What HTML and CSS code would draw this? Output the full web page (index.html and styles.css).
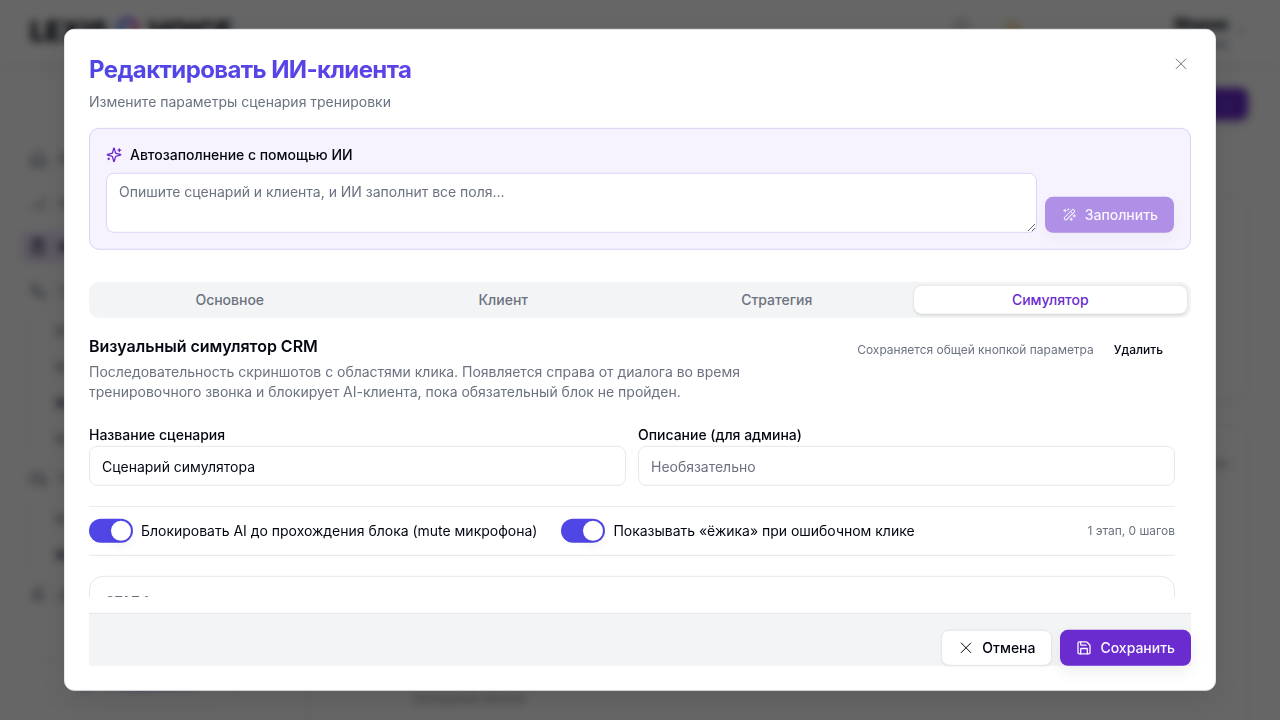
FILE: index.html
```html
<!DOCTYPE html>
<html lang="ru">
<head>
  <meta charset="UTF-8">
  <title>Редактировать ИИ-клиента</title>
  <link rel="stylesheet" href="styles.css">
</head>
<body>
  <div class="app" aria-hidden="true">
    <header class="topbar">
      <div class="logo">LEXIS<span class="logo-dot"></span>VOICE</div>
      <div class="topbar-right">
        <span class="bell"></span>
        <span class="coin"></span>
        <div class="user"><b>Мария</b><small>Админ</small></div>
        <svg class="chevron" viewBox="0 0 24 24"><path d="m6 9 6 6 6-6"/></svg>
      </div>
    </header>
    <div class="columns">
      <aside class="sidebar">
        <nav class="nav">
          <a><svg viewBox="0 0 24 24"><path d="M3 10l9-7 9 7v11H3z M9 21v-8h6v8"/></svg>Я</a>
          <a><svg viewBox="0 0 24 24"><path d="M5 21v-6 M12 21V10 M19 21V4"/></svg>А</a>
          <a class="active"><svg viewBox="0 0 24 24"><path d="M5 4h14v17H5z M9 2h6v4H9z M9 11h6 M9 16h6"/></svg>И</a>
          <a><svg viewBox="0 0 24 24"><path d="M4 3h5l2 5-3 2a12 12 0 0 0 6 6l2-3 5 2v5C11 21 3 13 4 3z"/></svg>З</a>
          <div class="subnav">
            <a><i></i></a>
            <a><i></i></a>
            <a><i class="dark"></i></a>
            <a><i></i></a>
          </div>
          <a><svg viewBox="0 0 24 24"><path d="M3 4h13v10H8l-5 4z M19 9h2v12l-4-3h-6"/></svg>Ч</a>
          <div class="subnav">
            <a><i></i></a>
            <a><i class="dark"></i></a>
          </div>
          <a><svg viewBox="0 0 24 24"><path d="M9 3h6v11H9z M5 11c0 9 14 9 14 0 M12 18v4"/></svg>Д</a>
        </nav>
        <div class="side-card"><i></i>Поддержка</div>
      </aside>
      <main class="page">
        <div class="page-head"><span class="create">+</span></div>
        <section class="panel first"></section>
        <section class="panel second"><div>Все</div><p>Холодный звонок</p></section>
      </main>
    </div>
  </div>

  <div class="overlay"></div>

  <div class="dialog" role="dialog">
    <div class="dialog-header">
      <h2 class="dialog-title">Редактировать ИИ-клиента</h2>
      <p class="dialog-desc">Измените параметры сценария тренировки</p>
    </div>

    <div class="ai-box">
      <div class="ai-title">
        <svg class="icon" viewBox="0 0 24 24"><path d="M9.937 15.5A2 2 0 0 0 8.5 14.063l-6.135-1.582a.5.5 0 0 1 0-.962L8.5 9.936A2 2 0 0 0 9.937 8.5l1.582-6.135a.5.5 0 0 1 .963 0L14.063 8.5A2 2 0 0 0 15.5 9.937l6.135 1.581a.5.5 0 0 1 0 .964L15.5 14.063a2 2 0 0 0-1.437 1.437l-1.582 6.135a.5.5 0 0 1-.963 0z"/><path d="M20 3v4"/><path d="M22 5h-4"/><path d="M4 17v2"/><path d="M5 18H3"/></svg>
        Автозаполнение с помощью ИИ
      </div>
      <div class="ai-row">
        <textarea class="ai-text" placeholder="Опишите сценарий и клиента, и ИИ заполнит все поля..."></textarea>
        <button class="btn btn-primary" disabled>
          <svg class="icon thin" viewBox="0 0 16 16"><rect x="1.9" y="6.4" width="13" height="2.9" rx="1" transform="rotate(-45 8.4 7.85)"/><path d="M9.6 4.8l1.9 1.9"/><path d="M4 2.5v2.6M2.7 3.8h2.6M7.3 2.1v1M6.8 2.6h1M13.2 7.8v2.6M11.9 9.1h2.6M10.3 11.2v2.4M9.1 12.4h2.4"/></svg>
          Заполнить
        </button>
      </div>
    </div>

    <div class="tabs">
      <button class="tab">Основное</button>
      <button class="tab">Клиент</button>
      <button class="tab">Стратегия</button>
      <button class="tab active">Симулятор</button>
    </div>

    <div class="content">
      <div class="sim-head">
        <div class="sim-info">
          <h3>Визуальный симулятор CRM</h3>
          <p>Последовательность скриншотов с областями клика. Появляется справа от диалога во время тренировочного звонка и блокирует AI-клиента, пока обязательный блок не пройден.</p>
        </div>
        <div class="sim-actions">
          <span>Сохраняется общей кнопкой параметра</span>
          <button class="btn-ghost">Удалить</button>
        </div>
      </div>

      <div class="fields">
        <div class="field">
          <label for="name">Название сценария</label>
          <input id="name" type="text" value="Сценарий симулятора">
        </div>
        <div class="field">
          <label for="desc">Описание (для админа)</label>
          <input id="desc" type="text" placeholder="Необязательно">
        </div>
      </div>

      <div class="switches">
        <div class="switch-item"><span class="switch"></span>Блокировать AI до прохождения блока (mute микрофона)</div>
        <div class="switch-item"><span class="switch"></span>Показывать «ёжика» при ошибочном клике</div>
        <span class="counter">1 этап, 0 шагов</span>
      </div>

      <div class="stage"><span>Этап 1</span></div>
    </div>

    <div class="dialog-footer">
      <button class="btn btn-outline">
        <svg class="icon thin" viewBox="0 0 16 16"><path d="M3.2 3.2l9.6 9.6M12.8 3.2l-9.6 9.6"/></svg>
        Отмена
      </button>
      <button class="btn btn-primary">
        <svg class="icon" viewBox="0 0 24 24"><path d="M15.2 3a2 2 0 0 1 1.4.6l3.8 3.8a2 2 0 0 1 .6 1.4V19a2 2 0 0 1-2 2H5a2 2 0 0 1-2-2V5a2 2 0 0 1 2-2z"/><path d="M17 21v-7a1 1 0 0 0-1-1H8a1 1 0 0 0-1 1v7"/><path d="M7 3v4a1 1 0 0 0 1 1h7"/></svg>
        Сохранить
      </button>
    </div>

    <button class="close" aria-label="Закрыть">
      <svg class="icon thin" viewBox="0 0 16 16"><path d="M3.2 3.2l9.6 9.6M12.8 3.2l-9.6 9.6"/></svg>
    </button>
  </div>
</body>
</html>
```

FILE: styles.css
```css
* {
  box-sizing: border-box;
}
body {
  margin: 0;
  height: 720px;
  overflow: hidden;
  background: #fff;
  color: #030712;
  font-family: Inter, sans-serif;
  font-size: 16px;
  line-height: 24px;
}
h2, h3, p {
  margin: 0;
}
button, input, textarea {
  font-family: inherit;
  font-size: 14px;
  line-height: 20px;
  letter-spacing: inherit;
  color: inherit;
}
button {
  border: 0;
  background: none;
  padding: 0;
}

/* page behind the dialog */
.app {
  height: 720px;
  overflow: hidden;
}
.topbar {
  display: flex;
  justify-content: space-between;
  height: 66px;
  padding: 0 32px 0 30px;
  border-bottom: 1px solid #eee;
  box-shadow: 0 2px 8px rgba(0, 0, 0, .06);
}
.logo {
  display: flex;
  align-items: center;
  padding-bottom: 1px;
  font-size: 27px;
  font-weight: 800;
}
.logo-dot {
  width: 22px;
  height: 22px;
  margin: 0 9px 6px;
  border-radius: 50%;
  border: 5px solid #8b5cf6;
  border-left-color: #3b82f6;
  border-right-color: #ec4899;
}
.topbar-right {
  display: flex;
  align-items: flex-start;
  padding-top: 14px;
}
.bell, .coin {
  width: 14px;
  height: 14px;
  margin: 5px 38px 0 0;
  border: 2px solid #999;
  border-radius: 50%;
}
.coin {
  margin-top: 7px;
  margin-right: 155px;
  border: 0;
  background: #f7d9a0;
}
.user {
  display: flex;
  flex-direction: column;
  align-items: flex-end;
  line-height: 20px;
}
.user small {
  color: #6b7280;
  font-size: 12px;
}
.chevron {
  width: 14px;
  margin: 10px 0 0 6px;
  fill: none;
  stroke: #999;
  stroke-width: 2;
}
.columns {
  display: flex;
  height: 654px;
}
.sidebar {
  display: flex;
  flex-direction: column;
  width: 257px;
  padding: 71px 16px 14px;
  border-right: 1px solid #f0f0f0;
}
.nav a {
  display: flex;
  align-items: center;
  gap: 12px;
  height: 44px;
  padding: 0 13px;
  color: #6b7280;
  font-size: 14px;
  font-weight: 500;
}
.nav svg {
  width: 18px;
  fill: none;
  stroke: #6b7280;
  stroke-width: 2;
}
.nav a.active {
  height: 32px;
  margin: 6px 0 6px 4px;
  padding-left: 9px;
  border-radius: 8px;
  background: #ede4fb;
  color: #1f1235;
  font-weight: 700;
}
.nav .active svg {
  stroke: #1f1235;
}
.subnav {
  margin-left: 13px;
  border-left: 1px solid #e5e7eb;
}
.subnav a {
  height: 36px;
}
.subnav i {
  width: 12px;
  height: 10px;
  margin-left: 13px;
  border-radius: 3px;
  background: #b6bbc3;
}
.subnav i.dark {
  background: #7d838f;
}
.side-card {
  display: flex;
  align-items: center;
  gap: 18px;
  height: 48px;
  margin-top: auto;
  padding-left: 62px;
  border: 1px solid #eee;
  border-radius: 12px;
  color: #6a2ccf;
  font-size: 14px;
  font-weight: 600;
}
.side-card i {
  width: 14px;
  height: 14px;
  border-radius: 50%;
  background: #a98be0;
}
.page {
  flex: 1;
  margin-left: 28px;
  padding: 22px 32px 0 22px;
  border-left: 1px solid #f0f0f0;
}
.page-head {
  display: flex;
  justify-content: flex-end;
}
.create {
  width: 140px;
  height: 32px;
  padding: 4px 16px;
  border-radius: 8px;
  background: #6a2ccf;
  color: #a883e6;
  text-align: right;
  box-shadow: 0 3px 8px rgba(0, 0, 0, .12);
}
.panel {
  border: 1px solid #f0f0f0;
  border-radius: 14px;
  box-shadow: 0 1px 4px rgba(0, 0, 0, .05);
}
.panel.first {
  height: 206px;
  margin-top: 75px;
}
.panel.second {
  height: 340px;
  margin-top: 24px;
  padding: 26px 20px;
  color: #6b7280;
  font-size: 12px;
  text-align: right;
}
.panel.second p {
  margin: 210px 0 0 84px;
  color: #8b919c;
  font-size: 13px;
  text-align: left;
}
.overlay {
  position: fixed;
  inset: 0;
  background: rgba(0, 0, 0, .6);
  backdrop-filter: blur(4px);
}

/* dialog */
.dialog {
  position: fixed;
  top: 50%;
  left: 50%;
  transform: translate(-50%, -50%);
  display: flex;
  flex-direction: column;
  width: 90vw;
  height: 92vh;
  padding: 24px;
  border: 1px solid #e5e7eb;
  border-radius: 10px;
  background: #fff;
  box-shadow: 0 10px 30px -5px rgba(0, 0, 0, .12);
  letter-spacing: -0.015px;
}
.dialog-header {
  display: flex;
  flex-direction: column;
  gap: 6px;
  flex: none;
}
.dialog-title {
  font-size: 24px;
  line-height: 32px;
  font-weight: 700;
  letter-spacing: -0.62px;
  color: transparent;
  background: linear-gradient(to right, #4f46e5, #7c3aed);
  background-clip: text;
  -webkit-background-clip: text;
}
.dialog-desc {
  color: #6b7280;
  font-size: 14px;
  line-height: 20px;
}
.icon {
  width: 16px;
  height: 16px;
  flex: none;
  fill: none;
  stroke: currentColor;
  stroke-width: 2;
  stroke-linecap: round;
  stroke-linejoin: round;
}
.icon.thin {
  stroke-width: 1;
}
.ai-box {
  flex: none;
  margin-top: 16px;
  padding: 16px;
  border: 1px solid #dccff7;
  border-radius: 10px;
  background: #f6f3fe;
}
.ai-title {
  display: flex;
  align-items: center;
  gap: 8px;
  font-size: 14px;
  line-height: 20px;
  font-weight: 500;
}
.ai-title .icon {
  color: #6a2ccf;
}
.ai-row {
  display: flex;
  align-items: flex-end;
  gap: 8px;
  margin-top: 8px;
}
.ai-text {
  flex: 1;
  height: 60px;
  padding: 8px 12px;
  border: 1px solid #dfd2f9;
  border-radius: 8px;
  background: #fff;
  resize: vertical;
}
.ai-text::placeholder, .field input::placeholder {
  color: #6b7280;
}
.btn {
  display: flex;
  align-items: center;
  gap: 8px;
  height: 36px;
  padding: 0 16px;
  border-radius: 8px;
  font-weight: 500;
  white-space: nowrap;
}
.btn-primary {
  background: #6a2ccf;
  color: #faf8ff;
  box-shadow: 0 6px 16px rgba(0, 0, 0, .07);
}
.btn:disabled {
  opacity: .5;
}
.btn-outline {
  border: 1px solid #e5e7eb;
  background: #fff;
  box-shadow: 0 1px 2px rgba(0, 0, 0, .05);
}
.tabs {
  display: grid;
  grid-template-columns: repeat(4, 1fr);
  flex: none;
  height: 36px;
  margin: 32px 0 16px;
  padding: 4px;
  border-radius: 10px;
  background: #f3f4f6;
}
.tab {
  border-radius: 8px;
  color: #6b7280;
  font-weight: 500;
}
.tab.active {
  background: #fff;
  color: #6a2ccf;
  box-shadow: 0 1px 3px rgba(0, 0, 0, .15);
}
.content {
  display: flex;
  flex-direction: column;
  gap: 20px;
  flex: 1;
  min-height: 0;
  padding-right: 16px;
  overflow: hidden;
}
.content > * {
  flex: none;
}
.sim-head {
  display: flex;
  justify-content: space-between;
  align-items: flex-start;
}
.sim-info {
  width: 672px;
}
.sim-info h3 {
  font-size: 16px;
  line-height: 24px;
  font-weight: 600;
}
.sim-info p {
  margin-top: 4px;
  color: #6b7280;
  font-size: 14px;
  line-height: 20px;
}
.sim-actions {
  display: flex;
  align-items: center;
  gap: 8px;
  color: #6b7280;
  font-size: 12px;
}
.btn-ghost {
  height: 32px;
  padding: 0 12px;
  color: #030712;
  font-size: 12px;
  font-weight: 500;
}
.fields {
  display: grid;
  grid-template-columns: 1fr 1fr;
  gap: 12px;
}
.field label {
  display: block;
  height: 24px;
  padding-top: 1px;
  font-size: 14px;
  font-weight: 500;
}
.field input {
  display: block;
  width: 100%;
  height: 40px;
  padding: 8px 12px;
  border: 1px solid #e5e7eb;
  border-radius: 8px;
  background: #fff;
}
.switches {
  display: flex;
  align-items: center;
  gap: 24px;
  padding: 12px 0;
  border-top: 1px solid #e5e7eb;
  border-bottom: 1px solid #e5e7eb;
}
.switch-item {
  display: flex;
  align-items: center;
  gap: 8px;
  font-size: 14px;
}
.switch {
  display: flex;
  justify-content: flex-end;
  width: 44px;
  height: 24px;
  padding: 2px;
  border-radius: 12px;
  background: #4f46e5;
}
.switch::after {
  content: "";
  width: 20px;
  height: 20px;
  border-radius: 50%;
  background: #fff;
  box-shadow: 0 6px 12px rgba(0, 0, 0, .06);
}
.counter {
  margin-left: auto;
  color: #6b7280;
  font-size: 12px;
}
.stage {
  height: 180px;
  padding: 16px;
  border: 1px solid #e5e7eb;
  border-radius: 14px;
  color: #6b7280;
  font-size: 12px;
  line-height: 16px;
  font-weight: 600;
  letter-spacing: .3px;
  text-transform: uppercase;
}
.stage span {
  display: block;
}
.dialog-footer {
  display: flex;
  justify-content: flex-end;
  gap: 8px;
  flex: none;
  margin-top: 16px;
  padding-top: 16px;
  border-top: 1px solid #e5e7eb;
  background: #f3f4f6;
}
.close {
  position: absolute;
  top: 26px;
  right: 26px;
  width: 16px;
  height: 16px;
  color: #6b7280;
}
.close .icon {
  display: block;
}
```
